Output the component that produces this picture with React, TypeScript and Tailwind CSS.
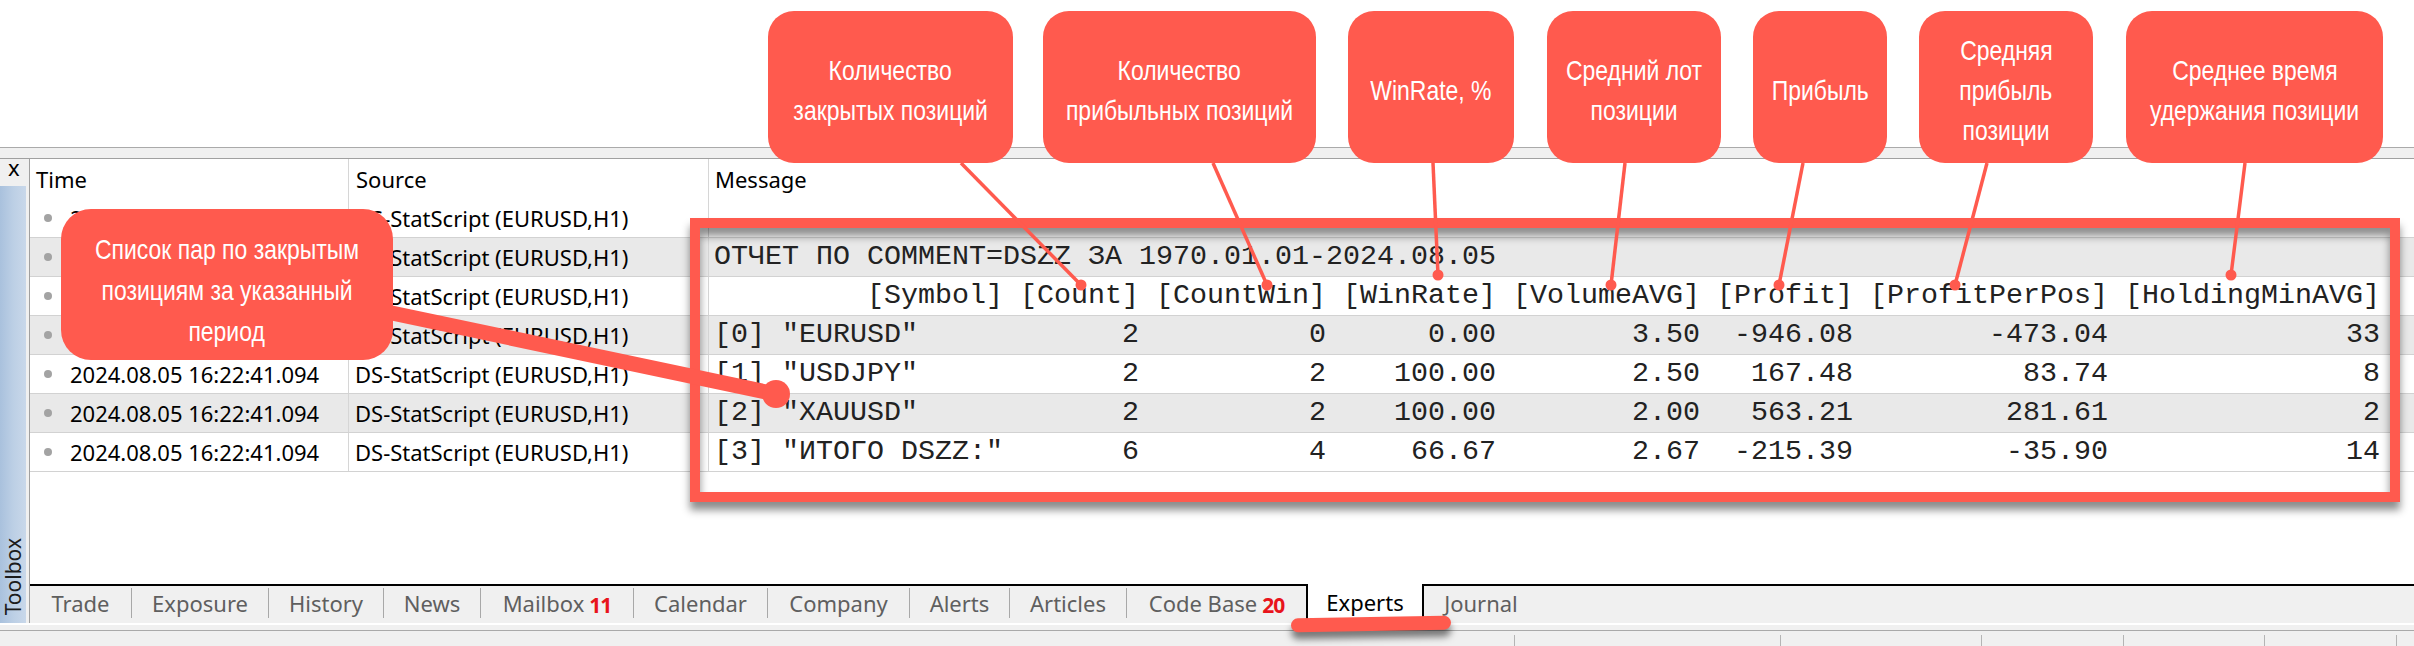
import React from 'react';

const TIME = '2024.08.05 16:22:41.094';
const SOURCE = 'DS-StatScript (EURUSD,H1)';

// widths of ArrayPrint columns, in characters
const colW = [13, 7, 10, 9, 11, 8, 14, 15];
const heads = ['[Symbol]', '[Count]', '[CountWin]', '[WinRate]', '[VolumeAVG]', '[Profit]', '[ProfitPerPos]', '[HoldingMinAVG]'];
const recs = [
    ['"EURUSD"', '2', '0', '0.00', '3.50', '-946.08', '-473.04', '33'],
    ['"USDJPY"', '2', '2', '100.00', '2.50', '167.48', '83.74', '8'],
    ['"XAUUSD"', '2', '2', '100.00', '2.00', '563.21', '281.61', '2'],
    ['"ИТОГО DSZZ:"', '6', '4', '66.67', '2.67', '-215.39', '-35.90', '14'],
];

const headLine = '    ' + heads.map((h, k) => h.padStart(colW[k])).join(' ');
const recLine = (i: number, r: string[]) =>
    `[${i}] ` + r.map((v, k) => (k === 0 ? v.padEnd(colW[k]) : v.padStart(colW[k]))).join(' ');

const messages = [
    '',
    'ОТЧЕТ ПО COMMENT=DSZZ ЗА 1970.01.01-2024.08.05',
    headLine,
    ...recs.map((r, i) => recLine(i, r)),
];

const tabs = [
    { label: 'Trade', w: 'w-[102px]' },
    { label: 'Exposure', w: 'w-[137px]' },
    { label: 'History', w: 'w-[115px]' },
    { label: 'News', w: 'w-[97px]' },
    { label: 'Mailbox', w: 'w-[153px]', badge: '11' },
    { label: 'Calendar', w: 'w-[134px]' },
    { label: 'Company', w: 'w-[142px]' },
    { label: 'Alerts', w: 'w-[100px]' },
    { label: 'Articles', w: 'w-[117px]' },
    { label: 'Code Base', w: 'w-[179px]', badge: '20', noSep: true },
];

const bubbles = [
    { cls: 'left-[768px] w-[245px]', lines: ['Количество', 'закрытых позиций'] },
    { cls: 'left-[1043px] w-[273px]', lines: ['Количество', 'прибыльных позиций'] },
    { cls: 'left-[1348px] w-[166px]', lines: ['WinRate, %'] },
    { cls: 'left-[1547px] w-[174px]', lines: ['Средний лот', 'позиции'] },
    { cls: 'left-[1753px] w-[134px]', lines: ['Прибыль'] },
    { cls: 'left-[1919px] w-[174px]', lines: ['Средняя', 'прибыль', 'позиции'] },
    { cls: 'left-[2126px] w-[257px]', lines: ['Среднее время', 'удержания позиции'] },
];

const pointers = [
    [961, 163, 1081, 285],
    [1213, 163, 1267, 285],
    [1433, 163, 1438, 275],
    [1625, 163, 1611, 285],
    [1803, 163, 1779, 285],
    [1987, 163, 1955, 285],
    [2245, 163, 2231, 275],
];

// narrow label line: the callouts use a condensed face
const Narrow = ({ children }: { children: React.ReactNode }) => (
    <span className="inline-block whitespace-nowrap scale-x-[0.82]">{children}</span>
);

const LogRow = ({ idx, msg }: { idx: number; msg: string }) => (
    <div className={`flex h-[39px] border-b border-[#d2d2d2] ${idx % 2 === 1 ? 'bg-[#e9e9e9]' : 'bg-white'}`}>
        <div className="w-[318px] flex items-center pl-[14px]">
            <span className="w-[8px] h-[8px] rounded-full bg-[#a3a3a3]" />
            <span className="ml-[18px] text-[22px] whitespace-nowrap">{TIME}</span>
        </div>
        <div className="w-[360px] border-l border-[#d6d6d6] flex items-center pl-[6px] text-[22px] whitespace-nowrap">{SOURCE}</div>
        <div className="flex-1 border-l border-[#d6d6d6] flex items-center pl-[5px] font-['Liberation_Mono',monospace] text-[28.33px] text-[#222] whitespace-pre">{msg}</div>
    </div>
);

const TabBar = () => (
    <div className="flex h-[39px] border-t-2 border-black bg-[#f0f0f0] text-[22px] text-[#5f5f5f]">
        {tabs.map(t => (
            <div key={t.label} className={`${t.w} h-[30px] mt-[2px] flex items-center justify-center ${t.noSep ? '' : 'border-r border-[#a8a8a8]'}`}>
                <span>{t.label}</span>
                {t.badge && <span className="ml-[5px] translate-y-[3px] text-[21px] font-bold text-[#e8141c] tracking-[-1px]">{t.badge}</span>}
            </div>
        ))}
        <div className="w-[118px] h-[36px] -mt-[2px] bg-white border-x-2 border-black flex items-center justify-center text-black">Experts</div>
        <div className="w-[114px] h-[30px] mt-[2px] flex items-center justify-center">Journal</div>
    </div>
);

const StatusBar = () => (
    <div className="h-[23px] flex flex-col bg-[#f0f0f0]">
        <div className="h-[7px] border-t-2 border-white" />
        <div className="flex-1 flex border-t border-[#a9a9a9]">
            <div className="w-[1514px]" />
            {['w-[266px]', 'w-[201px]', 'w-[142px]', 'w-[141px]', 'w-[132px]', 'flex-1'].map(w => (
                <div key={w} className={`${w} mt-[4px] border-l border-[#b4b4b4]`} />
            ))}
        </div>
    </div>
);

export default function App() {
    return (
        <div className="relative w-[2414px] h-[646px] overflow-hidden bg-white text-black font-['Noto_Sans',sans-serif]">
            <div className="h-[147px] bg-white" />
            <div className="h-[12px] bg-[#f0f0f0] border-t border-[#aaaaaa] border-b border-b-[#a0a0a0]" />
            <div className="flex h-[464px]">
                {/* toolbox side */}
                <div className="w-[29px] flex flex-col bg-[#f0f0f0]">
                    <div className="h-[27px] pl-[8px] text-[22px] leading-[16px]">x</div>
                    <div className="w-[26px] flex-1 flex flex-col justify-end items-center pb-[8px] bg-gradient-to-r from-[#a9c1dd] via-[#bccfe5] to-[#c9d8ea]">
                        <span className="[writing-mode:vertical-rl] rotate-180 text-[21px] leading-[22px] text-[#1c1c1c]">Toolbox</span>
                    </div>
                </div>
                <div className="flex-1 flex flex-col border-l border-[#a0a0a0]">
                    <div className="flex h-[40px] text-[22px]">
                        <div className="w-[318px] flex items-center pl-[6px]">Time</div>
                        <div className="w-[360px] border-l border-[#d6d6d6] flex items-center pl-[7px]">Source</div>
                        <div className="flex-1 border-l border-[#d6d6d6] flex items-center pl-[6px]">Message</div>
                    </div>
                    {messages.map((m, i) => <LogRow key={i} idx={i} msg={m} />)}
                    <div className="flex-1 bg-white" />
                    <TabBar />
                </div>
            </div>
            <StatusBar />

            {/* annotations laid over the terminal */}
            <div className="absolute left-[690px] top-[218px] w-[1710px] h-[284px] border-[10px] border-[#ff5a4e] shadow-[0_8px_8px_rgba(0,0,0,0.45),inset_0_8px_8px_rgba(0,0,0,0.45)]" />
            <svg className="absolute inset-0 pointer-events-none" width="2414" height="646">
                {pointers.map(([x1, y1, x2, y2], i) => (
                    <g key={i}>
                        <line x1={x1} y1={y1} x2={x2} y2={y2} stroke="#ff5a4e" strokeWidth="3.5" />
                        <circle cx={x2} cy={y2} r="5.5" fill="#ff5a4e" />
                    </g>
                ))}
                <line x1="330" y1="300" x2="776" y2="394" stroke="#ff5a4e" strokeWidth="15" strokeLinecap="round" />
                <circle cx="776" cy="394" r="14" fill="#ff5a4e" />
            </svg>
            {bubbles.map((b, i) => (
                <div key={i} className={`absolute top-[11px] h-[152px] ${b.cls} rounded-[26px] bg-[#ff5a4e] flex flex-col items-center justify-center pt-[8px] text-white text-[28px] leading-[40px] font-['Liberation_Sans',sans-serif]`}>
                    {b.lines.map(l => <Narrow key={l}>{l}</Narrow>)}
                </div>
            ))}
            <div className="absolute left-[61px] top-[209px] w-[332px] h-[151px] rounded-[30px] bg-[#ff5a4e] flex flex-col items-center justify-center pt-[12px] text-white text-[28px] leading-[41px] font-['Liberation_Sans',sans-serif]">
                <Narrow>Список пар по закрытым</Narrow>
                <Narrow>позициям за указанный</Narrow>
                <Narrow>период</Narrow>
            </div>
            <div className="absolute left-[1291px] top-[617px] w-[160px] h-[14px] rounded-full bg-[#ff5a4e] -rotate-1 shadow-[0_7px_7px_rgba(0,0,0,0.5)]" />
        </div>
    );
}
